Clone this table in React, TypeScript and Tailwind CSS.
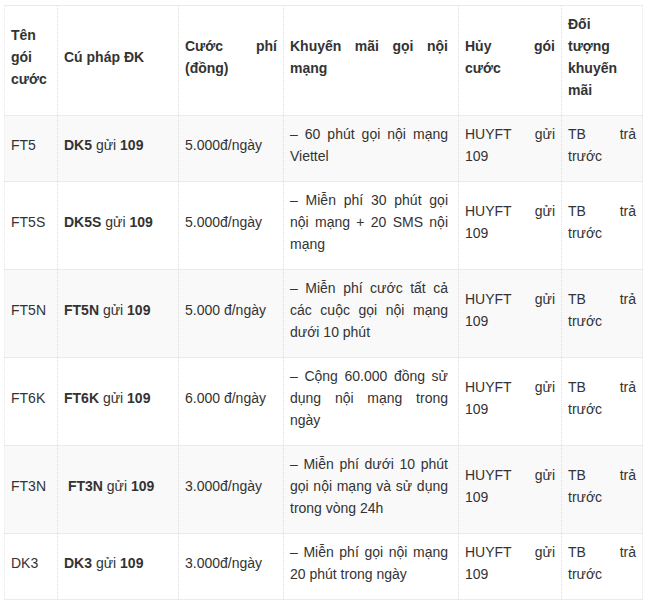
import React from 'react';

type Row = {
  name: string;
  code: string;
  price: string;
  promo: string;
};

const ROWS: Row[] = [
  { name: 'FT5', code: 'DK5', price: '5.000đ/ngày', promo: '– 60 phút gọi nội mạng Viettel' },
  { name: 'FT5S', code: 'DK5S', price: '5.000đ/ngày', promo: '– Miễn phí 30 phút gọi nội mạng + 20 SMS nội mạng' },
  { name: 'FT5N', code: 'FT5N', price: '5.000 đ/ngày', promo: '– Miễn phí cước tất cả các cuộc gọi nội mạng dưới 10 phút' },
  { name: 'FT6K', code: 'FT6K', price: '6.000 đ/ngày', promo: '– Cộng 60.000 đồng sử dụng nội mạng trong ngày' },
  { name: 'FT3N', code: '\u00a0FT3N', price: '3.000đ/ngày', promo: '– Miễn phí dưới 10 phút gọi nội mạng và sử dụng trong vòng 24h' },
  { name: 'DK3', code: 'DK3', price: '3.000đ/ngày', promo: '– Miễn phí gọi nội mạng 20 phút trong ngày' },
];

// cells: dotted column rules, solid outer edge
const cell =
  'border-l border-dotted border-l-[#ddd] first:border-l-solid first:border-l-[#e6e6e6] last:border-r last:border-r-[#e6e6e6] pt-[7px] pb-[14px] pl-[6px] pr-[6px] align-middle text-justify';
const promoCell =
  'border-l border-dotted border-l-[#ddd] pt-[7px] pb-[14px] pl-[6px] pr-[10px] align-middle text-justify';

export default function App() {
  return (
    <div className="bg-white min-h-screen pl-[4px] pt-[5px] font-['Liberation_Sans',Arial,sans-serif] text-[14px] leading-[22px] text-[#333]">
      <table className="w-[638px] table-fixed border-collapse">
        <colgroup>
          <col className="w-[53px]" />
          <col className="w-[121px]" />
          <col className="w-[105px]" />
          <col className="w-[175px]" />
          <col className="w-[103px]" />
          <col className="w-[81px]" />
        </colgroup>
        <thead>
          <tr className="border-y border-[#ebebeb] font-bold">
            <td className={cell}>Tên gói cước</td>
            <td className={cell}>Cú pháp ĐK</td>
            <td className={cell}>Cước phí (đồng)</td>
            <td className={promoCell}>Khuyến mãi gọi nội mạng</td>
            <td className={cell}>Hủy gói cước</td>
            <td className={cell}>Đối tượng khuyến mãi</td>
          </tr>
        </thead>
        <tbody>
          {ROWS.map((row, i) => (
            <tr key={row.name} className={`border-b border-[#ebebeb] ${i % 2 === 0 ? 'bg-[#f9f9f9]' : 'bg-white'}`}>
              <td className={cell}>{row.name}</td>
              <td className={cell}>
                <b>{row.code}</b> gửi <b>109</b>
              </td>
              <td className={cell}>{row.price}</td>
              <td className={promoCell}>{row.promo}</td>
              <td className={cell}>HUYFT gửi 109</td>
              <td className={cell}>TB trả trước</td>
            </tr>
          ))}
        </tbody>
      </table>
    </div>
  );
}
